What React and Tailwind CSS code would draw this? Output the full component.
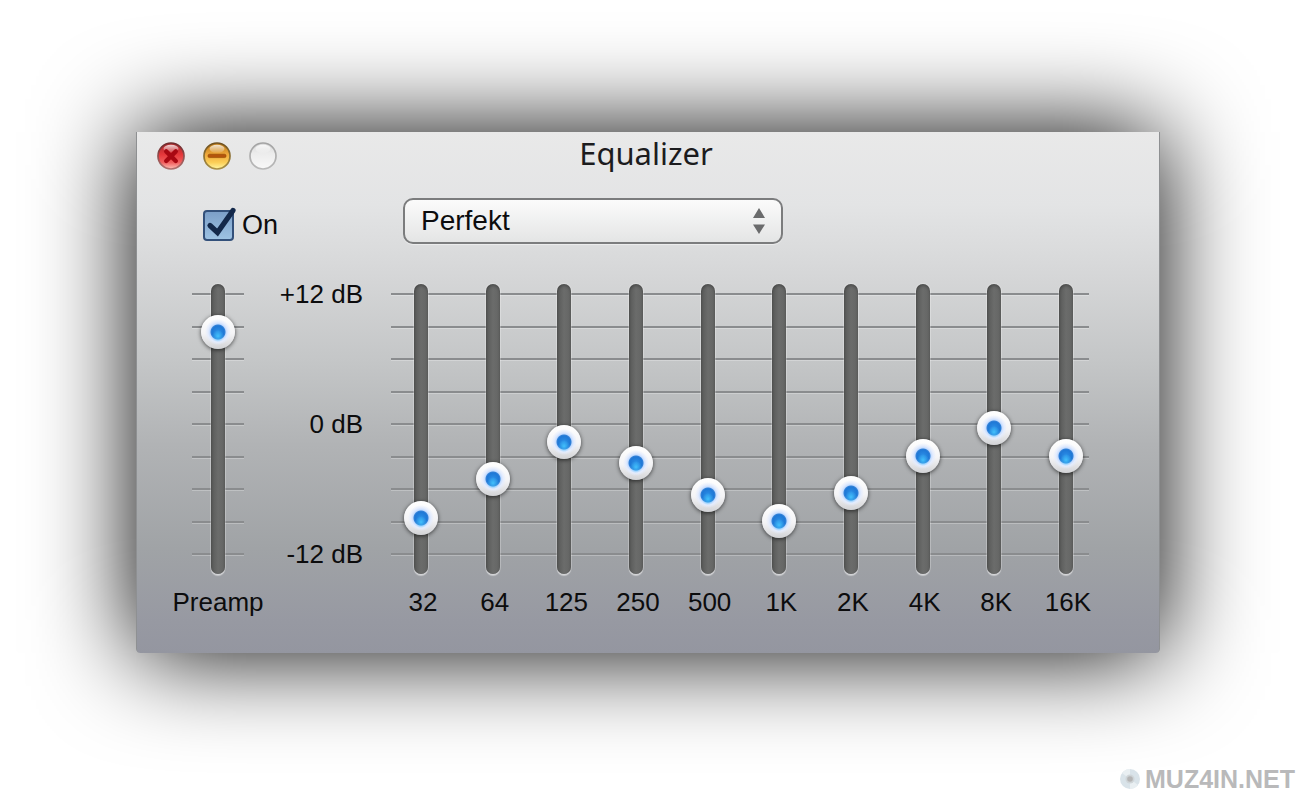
import { useState } from "react";

const BANDS = [
  { label: "32", value: -8.3 },
  { label: "64", value: -4.7 },
  { label: "125", value: -1.2 },
  { label: "250", value: -3.2 },
  { label: "500", value: -6.2 },
  { label: "1K", value: -8.6 },
  { label: "2K", value: -6 },
  { label: "4K", value: -2.5 },
  { label: "8K", value: 0.1 },
  { label: "16K", value: -2.5 },
];

const PRESETS = ["Perfekt", "Flat", "Rock", "Jazz"];

function TrafficLight({ kind }) {
  return (
    <svg viewBox="0 0 28 28" className="block size-7">
      <defs>
        <linearGradient id={`${kind}-body`} x1="0" y1="0" x2="0" y2="1">
          {kind === "close" && (
            <>
              <stop offset="0" stopColor="#a8272b" />
              <stop offset="0.45" stopColor="#e6383b" />
              <stop offset="0.75" stopColor="#f0605f" />
              <stop offset="1" stopColor="#ffc2b8" />
            </>
          )}
          {kind === "minimize" && (
            <>
              <stop offset="0" stopColor="#b87716" />
              <stop offset="0.45" stopColor="#f0a93c" />
              <stop offset="0.75" stopColor="#fbcf58" />
              <stop offset="1" stopColor="#fff6a0" />
            </>
          )}
          {kind === "zoom" && (
            <>
              <stop offset="0" stopColor="#d8d8d8" />
              <stop offset="0.4" stopColor="#ececec" />
              <stop offset="1" stopColor="#f8f8f8" />
            </>
          )}
        </linearGradient>
        <linearGradient id={`${kind}-rim`} x1="0" y1="0" x2="0" y2="1">
          <stop offset="0" stopColor={kind === "close" ? "#6e2a2c" : kind === "minimize" ? "#6f5020" : "#a3a3a3"} />
          <stop offset="1" stopColor={kind === "close" ? "#b0706e" : kind === "minimize" ? "#a99045" : "#b9b9b9"} />
        </linearGradient>
        <linearGradient id={`${kind}-gloss`} x1="0" y1="0" x2="0" y2="1">
          <stop offset="0" stopColor="#fff" stopOpacity="0.8" />
          <stop offset="1" stopColor="#fff" stopOpacity="0.1" />
        </linearGradient>
      </defs>
      <circle cx="14" cy="14" r="13" fill={`url(#${kind}-body)`} stroke={`url(#${kind}-rim)`} strokeWidth="1.7" />
      <ellipse cx="14" cy="6.8" rx="7.5" ry="4" fill={`url(#${kind}-gloss)`} />
      {kind === "close" && (
        <path d="M9.2 9.400l9.600 9.600M18.800 9.400l-9.600 9.600" stroke="#a80812" strokeWidth="4.400" strokeLinecap="round" />
      )}
      {kind === "minimize" && (
        <rect x="5" y="12.2" width="18" height="3.4" rx="1.5" fill="#b4540c" stroke="#914400" strokeWidth="0.6" />
      )}
    </svg>
  );
}

function Ticks() {
  return (
    <div aria-hidden="true" className="col-start-1 row-start-1 flex flex-col justify-between pt-[9px] pb-[18px]">
      {Array.from({ length: 9 }, (_, i) => (
        <div key={i} className="h-[3px] border-t-2 border-b border-t-[#8a8c8e] border-b-white/25" />
      ))}
    </div>
  );
}

function Fader({ id, value, onChange }) {
  return (
    <div className="grid h-[290px] w-[34px] place-items-center">
      <div className="col-start-1 row-start-1 h-full w-[14px] rounded-full bg-linear-to-r from-[#585958] via-[#6b6c6b] to-[#646564] shadow-[0_0_0_1px_rgba(255,255,255,0.22),0_2px_1px_rgba(255,255,255,0.45),inset_0_2px_3px_rgba(0,0,0,0.25)]" />
      <input
        id={id}
        type="range"
        min="-12"
        max="12"
        step="0.1"
        value={value}
        onChange={(e) => onChange(Number(e.target.value))}
        className="col-start-1 row-start-1 m-0 h-full w-[34px] cursor-pointer appearance-none bg-transparent [direction:rtl] [writing-mode:vertical-lr] [&::-webkit-slider-thumb]:size-[34px] [&::-webkit-slider-thumb]:appearance-none [&::-webkit-slider-thumb]:rounded-full [&::-webkit-slider-thumb]:bg-[radial-gradient(circle_at_50%_62%,rgba(70,200,255,0.9)_0px,rgba(70,200,255,0)_6px),radial-gradient(circle_at_50%_50%,#2b8fe6_0px,#1f78d6_6px,#3482d8_7px,#c4dcff_8px,#e4ecfd_10px,transparent_13px),linear-gradient(#ffffff,#f4f4f6_55%,#d2d3d6)] [&::-webkit-slider-thumb]:shadow-[0_1px_4px_rgba(0,0,0,0.65)]"
      />
    </div>
  );
}

export default function App() {
  const [on, setOn] = useState(true);
  const [preset, setPreset] = useState("Perfekt");
  const [preamp, setPreamp] = useState(9.1);
  const [levels, setLevels] = useState(BANDS.map((b) => b.value));

  const setLevel = (index, value) =>
    setLevels((current) => current.map((level, i) => (i === index ? value : level)));

  return (
    <main className="flex min-h-screen flex-col bg-white pt-[132px] font-['Liberation_Sans',Arial,sans-serif] text-[26px] leading-8 text-[#0c0c0d]">
      <section className="mx-[136px] rounded-b-[4px] border-x border-x-[#8e9092] bg-[linear-gradient(#e9e9e9,#e3e4e5_14%,#d6d7d8_27%,#c4c6c7_44%,#b1b3b5_60%,#a0a3a6_80%,#9799a2_94%,#9496a0)] pb-[35px] shadow-[0_0_100px_0_#000]">
        <header className="grid grid-cols-[1fr_auto_1fr] items-start px-5">
          <div className="flex gap-[18px] pt-[10px]">
            <button type="button" aria-label="Close"><TrafficLight kind="close" /></button>
            <button type="button" aria-label="Minimize"><TrafficLight kind="minimize" /></button>
            <button type="button" aria-label="Zoom"><TrafficLight kind="zoom" /></button>
          </div>
          <h1 className="pt-px pr-1 font-['Noto_Sans','Open_Sans',sans-serif] text-[31px] leading-10 text-[#1c1c1e]">Equalizer</h1>
        </header>

        <div className="flex items-center pt-[25px] pl-[66px]">
          <label className="flex w-[200px] items-center gap-2 pt-2 text-[27px]">
            <span className="grid size-[31px]">
              <input
                type="checkbox"
                checked={on}
                onChange={(e) => setOn(e.target.checked)}
                className="col-start-1 row-start-1 size-[31px] appearance-none rounded-[4px] border-2 border-[#33507a] bg-linear-to-b from-[#7c9fc8] to-[#9dc2e3]"
              />
              {on && (
                <svg viewBox="0 0 31 31" className="pointer-events-none col-start-1 row-start-1 size-[31px] overflow-visible">
                  <path d="M7 15.500L14.500 22.500L30 0.500" fill="none" stroke="#13284a" strokeWidth="5.200" strokeLinecap="round" />
                </svg>
              )}
            </span>
            On
          </label>
          <div className="grid w-[380px] items-center">
            <select
              aria-label="Preset"
              value={preset}
              onChange={(e) => setPreset(e.target.value)}
              className="col-start-1 row-start-1 h-[46px] appearance-none rounded-[10px] border-2 border-[#7b7c7d] bg-linear-to-b from-[#fbfbfb] to-[#e4e5e5] px-4 text-[28px] leading-8 shadow-[0_1px_1px_rgba(255,255,255,0.5)]"
            >
              {PRESETS.map((name) => (
                <option key={name}>{name}</option>
              ))}
            </select>
            <svg viewBox="0 0 12 28" className="pointer-events-none col-start-1 row-start-1 mr-[18px] h-7 w-3 justify-self-end">
              <path d="M6 1L12 11H0ZM6 27L0 17.500H12Z" fill="#6a6b6c" />
            </svg>
          </div>
        </div>

        <div className="flex pt-10 pr-[70px] pl-9">
          <div className="flex w-[90px] flex-col items-center gap-3">
            <div className="grid w-[52px]">
              <Ticks />
              <div className="col-start-1 row-start-1 flex justify-center">
                <Fader id="preamp" value={preamp} onChange={setPreamp} />
              </div>
            </div>
            <label htmlFor="preamp">Preamp</label>
          </div>

          <div className="flex h-[286px] w-[100px] flex-col justify-between text-right whitespace-nowrap">
            <span className="-mt-[6px]">+12 dB</span>
            <span>0 dB</span>
            <span>-12 dB</span>
          </div>

          <div className="ml-7 flex flex-1 flex-col gap-3">
            <div className="grid">
              <Ticks />
              <div className="col-start-1 row-start-1 flex justify-between pr-[6px] pl-[13px]">
                {BANDS.map((band, i) => (
                  <Fader
                    key={band.label}
                    id={`band-${band.label}`}
                    value={levels[i]}
                    onChange={(value) => setLevel(i, value)}
                  />
                ))}
              </div>
            </div>
            <div className="flex justify-between pr-1 pl-[15px]">
              {BANDS.map((band) => (
                <label key={band.label} htmlFor={`band-${band.label}`} className="flex w-[34px] justify-center">
                  {band.label}
                </label>
              ))}
            </div>
          </div>
        </div>
      </section>

      <footer className="mt-auto flex items-center justify-end gap-1 pr-px text-[25px] leading-7 font-bold text-[#b9b9ba]">
        <svg viewBox="0 0 22 22" className="size-[22px]">
          <circle cx="11" cy="11" r="10" fill="#d9e3e9" />
          <path d="M11 11L3 5A10 10 0 0 1 11 1ZM11 11L19 17A10 10 0 0 1 11 21Z" fill="#e9eff2" />
          <circle cx="11" cy="11" r="4.500" fill="#cfd5d8" />
          <circle cx="11" cy="11" r="2.800" fill="#b5b5b5" />
        </svg>
        MUZ4IN.NET
      </footer>
    </main>
  );
}
